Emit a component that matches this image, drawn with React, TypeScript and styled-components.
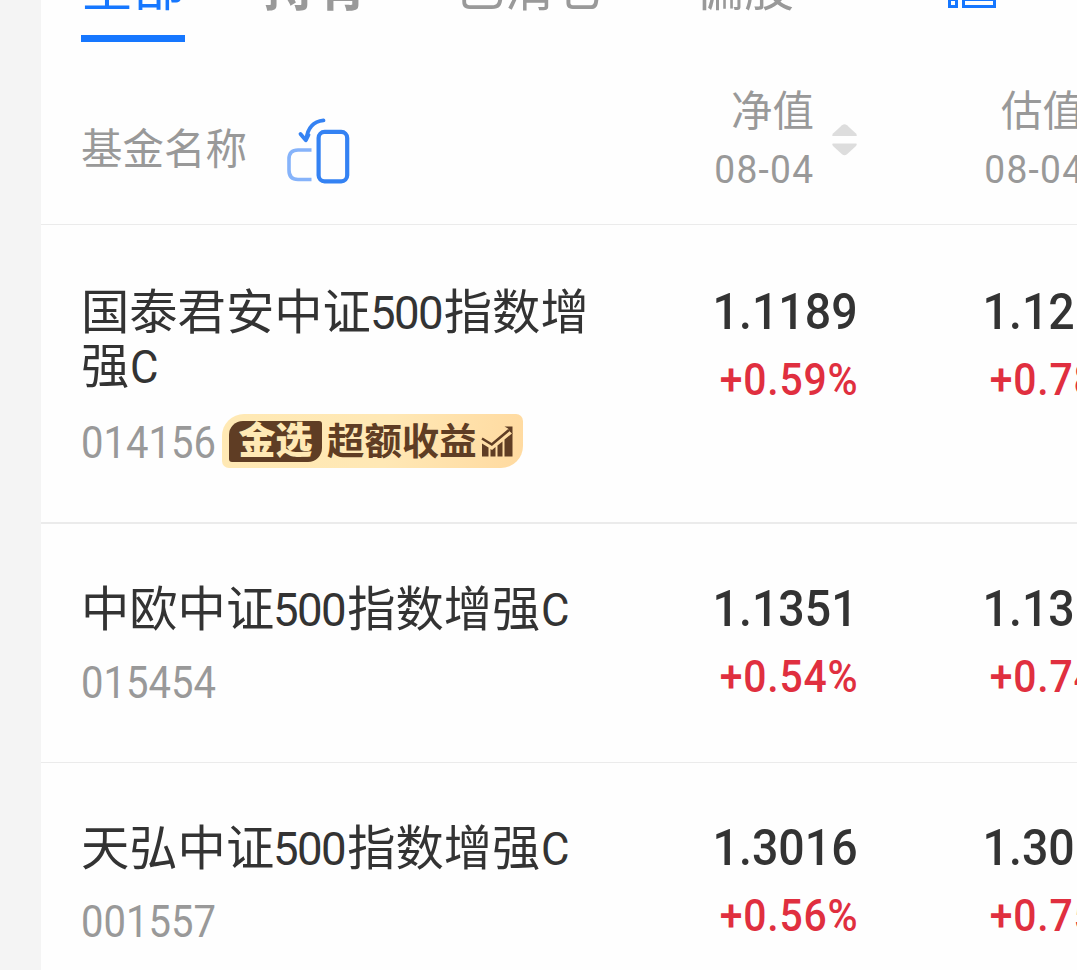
import React from "react";
import styled, { createGlobalStyle } from "styled-components";

const funds = [
  {
    name: ["国泰君安中证", "500", "指数增强", "C"],
    code: "014156",
    featured: true,
    net: "1.1189",
    netRate: "+0.59%",
    estimate: "1.1210",
    estimateRate: "+0.78%",
  },
  {
    name: ["中欧中证", "500", "指数增强", "C"],
    code: "015454",
    featured: false,
    net: "1.1351",
    netRate: "+0.54%",
    estimate: "1.1366",
    estimateRate: "+0.74%",
  },
  {
    name: ["天弘中证", "500", "指数增强", "C"],
    code: "001557",
    featured: false,
    net: "1.3016",
    netRate: "+0.56%",
    estimate: "1.3016",
    estimateRate: "+0.75%",
  },
];

const SwapIcon = () => (
  <svg width="66" height="68" viewBox="0 0 66 68" fill="none">
    <path
      d="M26.5 33H13Q4 33 4 42V53Q4 62.5 13 62.5H26.5"
      stroke="#86b3fa"
      strokeWidth="3.6"
    />
    <rect x="33.6" y="14.9" width="28.6" height="49.4" rx="6" stroke="#3482f3" strokeWidth="4.2" />
    <path
      d="M38.5 3.4C28 4.4 22.5 12 21.3 22.5M15.5 17L20.8 23.3L23.5 18"
      stroke="#3482f3"
      strokeWidth="3.8"
      strokeLinecap="round"
      strokeLinejoin="round"
    />
  </svg>
);

const SortIcon = () => (
  <svg width="26" height="32" viewBox="0 0 26 32" fill="#ddd">
    <path d="M10 1.2Q12.5 -0.8 15 1.2L24 9.5Q25.5 12 24 12H1Q-0.5 12 1 9.5Z" />
    <path d="M10 30.3Q12.5 32.3 15 30.3L24 22Q25.5 19.5 24 19.5H1Q-0.5 19.5 1 22Z" />
  </svg>
);

const LayoutIcon = () => (
  <svg width="48" height="48" viewBox="0 0 48 48" fill="none" stroke="#1677ff" strokeWidth="3">
    <rect x="1.5" y="1.5" width="7" height="9" />
    <rect x="15.5" y="1.5" width="31" height="9" />
    <rect x="1.5" y="19.5" width="7" height="8" />
    <rect x="15.5" y="19.5" width="31" height="8" />
    <rect x="1.5" y="39.5" width="7" height="7" />
    <rect x="15.5" y="39.5" width="31" height="7" />
  </svg>
);

const GrowthIcon = () => (
  <svg width="33" height="32" viewBox="0 0 33 32" fill="none">
    <path
      d="M1 18.5L7.5 22.5V31.5H1ZM9.5 24L11 25L14.5 22V31.5H9.5ZM16.5 20.5L21.5 16.5V31.5H16.5ZM23.5 14.5L31.5 8V31.5H23.5Z"
      fill="#5f3d24"
    />
    <path d="M1 13.5L10.8 19.5L28 5" stroke="#5f3d24" strokeWidth="2.6" />
    <path d="M23.5 1.5H31.5V9L28.8 6.4L27 3.6Z" fill="#5f3d24" />
  </svg>
);

const FundBadge = () => (
  <Badge>
    <BadgeMark>金选</BadgeMark>
    <BadgeText>超额收益</BadgeText>
    <GrowthIcon />
  </Badge>
);

const App = () => {
  return (
    <>
      <GlobalStyle />
      <Page>
        <Panel>
          <Tabs>
            <Tab $active $size={52} $width={104} $gap={78}>
              全部
            </Tab>
            <Tab $bold $size={52} $width={104} $gap={88}>
              持有
            </Tab>
            <Tab $size={50} $width={150} $gap={89}>
              已清仓
            </Tab>
            <Tab $size={50} $width={100} $gap={154}>
              偏股
            </Tab>
            <LayoutButton>
              <LayoutIcon />
            </LayoutButton>
          </Tabs>

          <HeaderRow>
            <NameHead>
              基金名称
              <SwapIcon />
            </NameHead>
            <ValueHead>
              <HeadText>
                <div>净值</div>
                <HeadDate>08-04</HeadDate>
              </HeadText>
              <SortIcon />
            </ValueHead>
            <ValueHead>
              <HeadText>
                <div>估值</div>
                <HeadDate>08-04</HeadDate>
              </HeadText>
              <SortIcon />
            </ValueHead>
          </HeaderRow>

          {funds.map((fund) => (
            <FundRow key={fund.code} $featured={fund.featured}>
              <div>
                <FundName>
                  {fund.name[0]}
                  <Digits>{fund.name[1]}</Digits>
                  {fund.name[2]}
                  <Letter>{fund.name[3]}</Letter>
                </FundName>
                <FundMeta>
                  <Code $featured={fund.featured}>{fund.code}</Code>
                  {fund.featured && <FundBadge />}
                </FundMeta>
              </div>
              <ValueCell>
                <Price>{fund.net}</Price>
                <Rate>{fund.netRate}</Rate>
              </ValueCell>
              <ValueCell>
                <Price>{fund.estimate}</Price>
                <Rate>{fund.estimateRate}</Rate>
              </ValueCell>
            </FundRow>
          ))}
        </Panel>
      </Page>
    </>
  );
};

export default App;

//----------style----------
const GlobalStyle = createGlobalStyle`
  * {
    box-sizing: border-box;
  }

  body {
    margin: 0;
    overflow: hidden;
    font-family: Roboto, "Noto Sans CJK SC", sans-serif;
    background: #f4f4f4;
  }

  svg {
    display: block;
    flex-shrink: 0;
  }
`;

const Page = styled.main`
  width: 1077px;
  height: 970px;
  padding-left: 41px;
  overflow: hidden;
  background: #f4f4f4;
`;

const Panel = styled.section`
  height: 970px;
  overflow: hidden;
  background: #fefefe;
`;

const Tabs = styled.nav`
  display: flex;
  align-items: flex-end;
  height: 42px;
  padding-left: 40px;
`;

const Tab = styled.div<{
  $active?: boolean;
  $bold?: boolean;
  $size: number;
  $width: number;
  $gap: number;
}>`
  flex: 0 0 auto;
  width: ${({ $width }) => $width}px;
  margin-right: ${({ $gap }) => $gap}px;
  padding-bottom: 20px;
  border-bottom: 7px solid ${({ $active }) => ($active ? "#1677ff" : "transparent")};
  font-size: ${({ $size }) => $size}px;
  line-height: 52px;
  font-weight: ${({ $bold }) => ($bold ? 700 : 400)};
  white-space: nowrap;
  color: ${({ $active }) => ($active ? "#1677ff" : "#999")};
`;

const LayoutButton = styled.div`
  padding-bottom: 34px;
`;

const Row = styled.div`
  display: grid;
  grid-template-columns: 535px 242px 270px;
  padding-left: 40px;
  border-bottom: 1px solid #ebebeb;
`;

const HeaderRow = styled(Row)`
  height: 183px;
`;

const NameHead = styled.div`
  display: flex;
  align-items: flex-start;
  gap: 38px;
  padding-top: 77px;
  font-size: 41.5px;
  line-height: 62px;
  color: #999;

  svg {
    margin-top: -2px;
  }
`;

const ValueHead = styled.div`
  display: flex;
  justify-content: flex-end;
  gap: 18px;
  padding-top: 40px;
  font-size: 41.5px;
  line-height: 60px;
  color: #999;

  svg {
    margin-top: 42px;
  }
`;

const HeadText = styled.div`
  text-align: right;
`;

const HeadDate = styled.div`
  margin-top: -2px;
  font-size: 39.5px;
  letter-spacing: 1.3px;
  transform: scaleX(0.94);
  transform-origin: right;
`;

const FundRow = styled(Row)<{ $featured: boolean }>`
  height: ${({ $featured }) => ($featured ? 299 : 239)}px;
  padding-top: ${({ $featured }) => ($featured ? 60 : 58)}px;
  border-bottom-width: ${({ $featured }) => ($featured ? 2 : 1)}px;
`;

const FundName = styled.div`
  width: 522px;
  padding-top: 1px;
  font-size: 48.3px;
  line-height: 54px;
  color: #333;
`;

const Digits = styled.span`
  display: inline-block;
  width: 74px;
  margin-left: -1px;
  font-size: 46.5px;
  letter-spacing: -1.6px;
  transform: scaleX(0.98);
  transform-origin: left;
`;

const Letter = styled.span`
  display: inline-block;
  margin-left: 1px;
  font-size: 46.5px;
  transform: scaleX(0.94);
  transform-origin: left;
`;

const FundMeta = styled.div`
  display: flex;
  align-items: center;
  height: 54px;
  margin-top: 20px;
`;

const Code = styled.div<{ $featured: boolean }>`
  width: 141px;
  padding-top: ${({ $featured }) => ($featured ? 6 : 0)}px;
  font-size: 43.5px;
  line-height: 54px;
  color: #999;
  transform: scaleX(0.92);
  transform-origin: left;
`;

const Badge = styled.div`
  display: flex;
  align-items: center;
  width: 301px;
  height: 54px;
  padding-left: 7px;
  border-radius: 22px 7px 22px 7px;
  background: linear-gradient(100deg, #ffe9b4 0%, #ffe8b5 55%, #ffdaa0 100%);
  color: #5f3d24;
  white-space: nowrap;
`;

const BadgeMark = styled.div`
  display: flex;
  justify-content: center;
  width: 93px;
  height: 41px;
  border-radius: 14px 3px 14px 3px;
  font-size: 37px;
  line-height: 41px;
  font-weight: 900;
  color: #ffe9b5;
  background: #5f3d24;
`;

const BadgeText = styled.div`
  margin: 0 4px 0 5px;
  padding-top: 2px;
  font-size: 37.4px;
  line-height: 54px;
  font-weight: 700;
`;

const ValueCell = styled.div`
  display: flex;
  flex-direction: column;
  align-items: flex-end;
  white-space: nowrap;
`;

const Price = styled.div`
  font-size: 50.5px;
  line-height: 54px;
  font-weight: 500;
  color: #333;
  transform: scaleX(0.92);
  transform-origin: right;
`;

const Rate = styled.div`
  margin-top: 15px;
  font-size: 43.5px;
  line-height: 54px;
  font-weight: 500;
  letter-spacing: 0.8px;
  color: #e02f3f;
  transform: scaleX(0.94);
  transform-origin: right;
`;
